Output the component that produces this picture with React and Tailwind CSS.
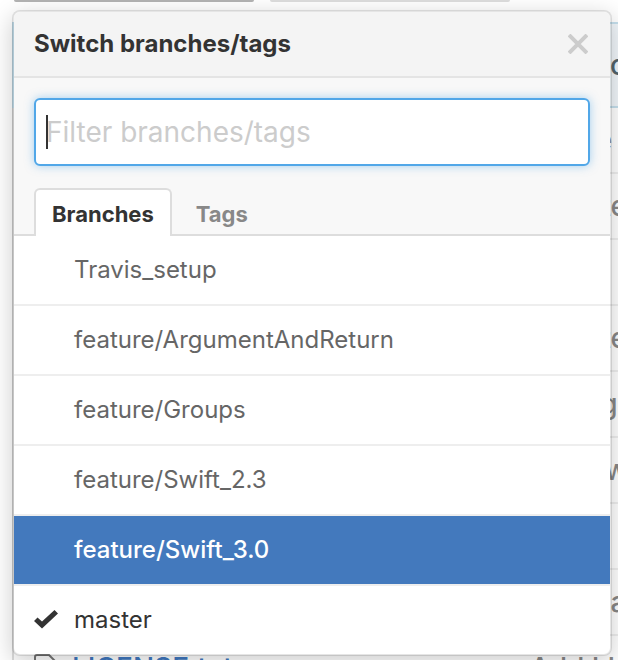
import React, { useState } from "react";

const branches = [
  "Travis_setup",
  "feature/ArgumentAndReturn",
  "feature/Groups",
  "feature/Swift_2.3",
  "feature/Swift_3.0",
  "master",
];

const files = [
  { id: 1, message: "Phase" },
  { id: 2, message: "Update" },
  { id: 3, message: "" },
  { id: 4, message: "Update" },
  { id: 5, message: "Wiring" },
  { id: 6, message: "Narrow" },
  { id: 7, message: "" },
  { id: 8, message: "Make a" },
  { id: 9, name: "LICENSE.txt", message: "Add LI" },
];

const FileIcon = () => (
  <svg width="24" height="28" viewBox="0 0 24 28" fill="none" stroke="#767676" strokeWidth="2" aria-hidden="true">
    <path d="M1 3a2 2 0 0 1 2-2h12l8 8v16a2 2 0 0 1-2 2H3a2 2 0 0 1-2-2z" />
    <path d="M5 7h6M5 13h13M5 19h13" />
  </svg>
);

const CheckIcon = () => (
  <svg width="24" height="20" viewBox="0 0 24 20" fill="#333333" aria-hidden="true">
    <path d="M20.5 0 24 3.5 8 18.5 0 11l3.5-3.5L8 11.5z" />
  </svg>
);

const CloseIcon = () => (
  <svg width="20" height="20" viewBox="0 0 20 20" fill="none" stroke="#cccccc" strokeWidth="4" aria-hidden="true">
    <path d="M1 1 19 19M19 1 1 19" />
  </svg>
);

const FileList = () => (
  <div className="text-[28px] font-medium">
    <div className="flex gap-4 pl-3.5">
      <div className="h-0.5 w-60 rounded-b-sm bg-[#b3b3b3]" />
      <div className="h-0.5 w-60 rounded-b-sm bg-[#dddddd]" />
    </div>
    <div className="ml-3 mt-5">
      <div className="flex h-[86px] items-center border-y-2 border-l-2 border-[#c5dfec] bg-[#f0f6fa] pl-[596px] text-[#52646c]">
        commit
      </div>
      <table className="w-full table-fixed border-separate border-spacing-0 border-l-2 border-[#dddddd] text-[#888888]">
        <tbody>
          {files.map((file) => (
            <tr key={file.id} className="h-[66px]">
              <td className="w-[58px] border-b-2 border-[#eeeeee] pl-5">
                {file.name && <FileIcon />}
              </td>
              <td className="w-[458px] border-b-2 border-[#eeeeee]">
                {file.name && <a href="#" className="text-[#4078c0]">{file.name}</a>}
              </td>
              <td className="whitespace-nowrap border-b-2 border-[#eeeeee]">{file.message}</td>
            </tr>
          ))}
        </tbody>
      </table>
    </div>
  </div>
);

const BranchMenu = () => {
  const [filter, setFilter] = useState("");
  const [active, setActive] = useState("feature/Swift_3.0");

  return (
    <div className="absolute left-3 right-1.5 top-2.5 rounded-lg border-2 border-black/10 bg-white bg-clip-padding shadow-[0_6px_24px_rgba(0,0,0,0.2)]">
      <div className="flex h-[66px] items-center justify-between rounded-t-md border-b-2 border-[#e4e4e4] bg-[#f4f4f4] px-5">
        <h2 className="text-2xl font-bold text-[#333333]">Switch branches/tags</h2>
        <button type="button" aria-label="Close" className="mr-0.5">
          <CloseIcon />
        </button>
      </div>

      <div className="bg-[#f8f8f8] pt-5">
        <div className="relative mx-5">
          <input
            type="text"
            autoFocus
            aria-label="Filter branches/tags"
            placeholder="Filter branches/tags"
            value={filter}
            onChange={(e) => setFilter(e.target.value)}
            className="h-[68px] w-full rounded-md border-2 border-[#51a7e8] bg-white px-2.5 text-[28px] text-[#333333] caret-transparent shadow-[0_0_10px_rgba(81,167,232,0.5)] outline-none placeholder:text-[#cccccc]"
          />
          {!filter && <span className="absolute left-3 top-[17px] h-[34px] w-0.5 bg-[#333333]" />}
        </div>

        <div className="mt-[22px] flex border-b-2 border-[#dddddd] px-5 text-[22px] font-bold">
          <button
            type="button"
            className="-mb-0.5 h-12 rounded-t-md border-2 border-b-0 border-[#dddddd] bg-white px-4 pt-0.5 text-[#333333]"
          >
            Branches
          </button>
          <button type="button" className="px-6 pt-1.5 text-[#888888]">
            Tags
          </button>
        </div>
      </div>

      <ul className="text-2xl">
        {branches
          .filter((name) => name.toLowerCase().includes(filter.toLowerCase()))
          .map((name) => (
            <li key={name} className="border-b-2 border-[#eeeeee] last:border-b-0">
              <a
                href="#"
                onMouseEnter={() => setActive(name)}
                className={
                  name === active
                    ? "flex h-[68px] items-center bg-[#4379bd] px-5 font-medium text-white"
                    : name === "master"
                      ? "flex h-[68px] items-center px-5 text-[#333333]"
                      : "flex h-[68px] items-center px-5 text-[#666666]"
                }
              >
                <span className="w-10">{name === "master" && <CheckIcon />}</span>
                {name}
              </a>
            </li>
          ))}
      </ul>
    </div>
  );
};

const App = () => {
  return (
    <div className="relative h-screen overflow-hidden bg-white font-['Inter',sans-serif]">
      <FileList />
      <BranchMenu />
    </div>
  );
};

export default App;
